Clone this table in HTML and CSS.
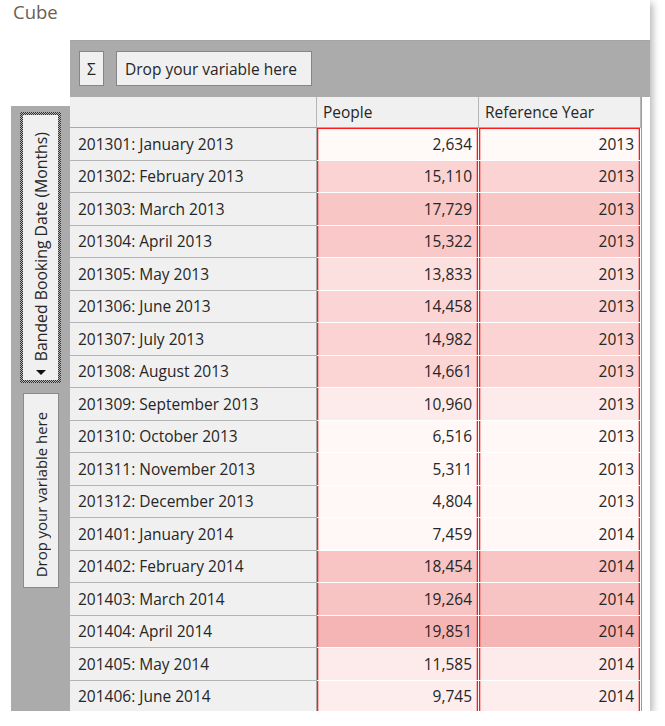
FILE: index.html
```html
<!DOCTYPE html>
<html>
<head>
<meta charset="utf-8">
<link rel="stylesheet" href="styles.css">
</head>
<body>
<div class="card">
  <div class="title">Cube</div>
  <div class="pivot">
    <div class="leftcol">
      <div class="vbtn vbtn-active">
        <span class="vtext vtext-lg">Banded Booking Date (Months)</span>
        <svg class="arrow" width="10" height="5" viewBox="0 0 10 5"><path d="M0 0H10L5 5Z" fill="#111"/></svg>
      </div>
      <div class="vbtn vbtn-drop">
        <span class="vtext">Drop your variable here</span>
      </div>
    </div>
    <div class="main">
      <div class="toolbar">
        <div class="btn btn-sigma">Σ</div>
        <div class="btn btn-drop">Drop your variable here</div>
      </div>
      <div class="tablewrap">
        <div class="grid">
          <div class="hcell"></div>
          <div class="hcell hpad">People</div>
          <div class="hcell hpad">Reference Year</div>

          <div class="lbl">201301: January 2013</div>
          <div class="num first" style="background:#fff9f8">2,634</div>
          <div class="num first" style="background:#fff9f8">2013</div>

          <div class="lbl">201302: February 2013</div>
          <div class="num" style="background:#fbd3d3">15,110</div>
          <div class="num" style="background:#fbd3d3">2013</div>

          <div class="lbl">201303: March 2013</div>
          <div class="num" style="background:#f9c6c6">17,729</div>
          <div class="num" style="background:#f9c6c6">2013</div>

          <div class="lbl">201304: April 2013</div>
          <div class="num" style="background:#f9c8c8">15,322</div>
          <div class="num" style="background:#f9c8c8">2013</div>

          <div class="lbl">201305: May 2013</div>
          <div class="num" style="background:#fcdfdf">13,833</div>
          <div class="num" style="background:#fcdfdf">2013</div>

          <div class="lbl">201306: June 2013</div>
          <div class="num" style="background:#fbd5d5">14,458</div>
          <div class="num" style="background:#fbd5d5">2013</div>

          <div class="lbl">201307: July 2013</div>
          <div class="num" style="background:#fbd3d3">14,982</div>
          <div class="num" style="background:#fbd3d3">2013</div>

          <div class="lbl">201308: August 2013</div>
          <div class="num" style="background:#fbd4d4">14,661</div>
          <div class="num" style="background:#fbd4d4">2013</div>

          <div class="lbl">201309: September 2013</div>
          <div class="num" style="background:#fdeaea">10,960</div>
          <div class="num" style="background:#fdeaea">2013</div>

          <div class="lbl">201310: October 2013</div>
          <div class="num" style="background:#fff8f7">6,516</div>
          <div class="num" style="background:#fff8f7">2013</div>

          <div class="lbl">201311: November 2013</div>
          <div class="num" style="background:#fff8f7">5,311</div>
          <div class="num" style="background:#fff8f7">2013</div>

          <div class="lbl">201312: December 2013</div>
          <div class="num" style="background:#fff8f7">4,804</div>
          <div class="num" style="background:#fff8f7">2013</div>

          <div class="lbl">201401: January 2014</div>
          <div class="num" style="background:#fff8f7">7,459</div>
          <div class="num" style="background:#fff8f7">2014</div>

          <div class="lbl">201402: February 2014</div>
          <div class="num" style="background:#f8c4c4">18,454</div>
          <div class="num" style="background:#f8c4c4">2014</div>

          <div class="lbl">201403: March 2014</div>
          <div class="num" style="background:#f8c3c3">19,264</div>
          <div class="num" style="background:#f8c3c3">2014</div>

          <div class="lbl">201404: April 2014</div>
          <div class="num" style="background:#f6b5b5">19,851</div>
          <div class="num" style="background:#f6b5b5">2014</div>

          <div class="lbl">201405: May 2014</div>
          <div class="num" style="background:#fdeaea">11,585</div>
          <div class="num" style="background:#fdeaea">2014</div>

          <div class="lbl">201406: June 2014</div>
          <div class="num" style="background:#fdeded">9,745</div>
          <div class="num" style="background:#fdeded">2014</div>
        </div>
      </div>
    </div>
  </div>
</div>
</body>
</html>
```

FILE: styles.css
```css
html, body {
  margin: 0;
  padding: 0;
  background: #ffffff;
}

body {
  font-family: "Open Sans", "Noto Sans", sans-serif;
  font-size: 15.5px;
  color: #262626;
}

.card {
  width: 650px;
  height: 711px;
  background: #ffffff;
  box-shadow: 3px 3px 7px rgba(0, 0, 0, 0.28);
  overflow: hidden;
  display: flex;
  flex-direction: column;
}

.title {
  height: 40px;
  padding-left: 13px;
  font-size: 18.5px;
  line-height: 24px;
  color: #6b5e54;
  box-sizing: border-box;
}

.pivot {
  flex: 1;
  display: flex;
  flex-direction: row;
  min-height: 0;
}

.leftcol {
  width: 59px;
  margin-left: 11px;
  margin-top: 66px;
  background: #ababab;
  display: flex;
  flex-direction: column;
  align-items: center;
  padding-top: 6px;
  gap: 10px;
  box-sizing: border-box;
}

.vbtn {
  display: flex;
  flex-direction: column;
  align-items: center;
  box-sizing: border-box;
  background: #f0f0f0;
}

.vbtn-active {
  width: 41px;
  height: 271px;
  border: 3px solid transparent;
  background:
    linear-gradient(#f0f0f0, #f0f0f0) padding-box,
    repeating-conic-gradient(#2e2e2e 0 25%, #b8b8b8 0 50%) 0 0 / 2px 2px border-box;
  justify-content: flex-end;
  padding-bottom: 5px;
  gap: 9px;
}

.vbtn-drop {
  width: 36px;
  height: 195px;
  border: 1px solid #8a8a8a;
  justify-content: center;
  padding-top: 8px;
}

.vtext {
  writing-mode: vertical-rl;
  transform: rotate(180deg);
  white-space: nowrap;
  line-height: 20px;
  font-size: 14.9px;
}

.vtext-lg {
  font-size: 15.8px;
}

.arrow {
  display: block;
}

.main {
  width: 580px;
  display: flex;
  flex-direction: column;
  min-height: 0;
}

.toolbar {
  height: 57px;
  background: #ababab;
  border-top: 1px solid #a4a4a4;
  box-sizing: border-box;
  display: flex;
  align-items: flex-start;
  padding-top: 10px;
  padding-left: 9px;
  gap: 12px;
}

.btn {
  height: 35px;
  background: #f0f0f0;
  border: 1px solid #858585;
  box-sizing: border-box;
  display: flex;
  align-items: center;
}

.btn-sigma {
  width: 25px;
  justify-content: center;
}

.btn-drop {
  width: 196px;
  padding-left: 8px;
  white-space: nowrap;
}

.tablewrap {
  flex: 1;
  background: #ffffff;
  min-height: 0;
}

.grid {
  display: grid;
  grid-template-columns: 247px 162px 162px;
  grid-template-rows: 31.2px;
  grid-auto-rows: 32.5px;
  width: 571px;
  border-right: 1px solid #9c9c9c;
}

.hcell {
  background: #f0f0f0;
  border-right: 1px solid #b6b6b6;
  border-bottom: 1px solid #a9a9a9;
  display: flex;
  align-items: center;
  box-sizing: border-box;
}

.hpad {
  padding-left: 6px;
}

.lbl {
  background: #f0f0f0;
  border-right: 1px solid #a9a9a9;
  border-bottom: 1px solid #b4b4b4;
  padding-left: 8px;
  display: flex;
  align-items: center;
  box-sizing: border-box;
  white-space: nowrap;
}

.num {
  border-right: 1px solid #ffffff;
  border-bottom: 1px solid #ffffff;
  box-shadow:
    inset 1px 0 0 #ff1a1a, inset -1px 0 0 #ff1a1a,
    inset 2px 0 0 rgba(255, 60, 60, 0.35), inset -2px 0 0 rgba(255, 60, 60, 0.35);
  padding-right: 6px;
  display: flex;
  align-items: center;
  justify-content: flex-end;
  box-sizing: border-box;
}

.num.first {
  box-shadow:
    inset 1px 0 0 #ff1a1a, inset -1px 0 0 #ff1a1a, inset 0 1px 0 #ff1a1a,
    inset 2px 0 0 rgba(255, 60, 60, 0.35), inset -2px 0 0 rgba(255, 60, 60, 0.35);
}
```
